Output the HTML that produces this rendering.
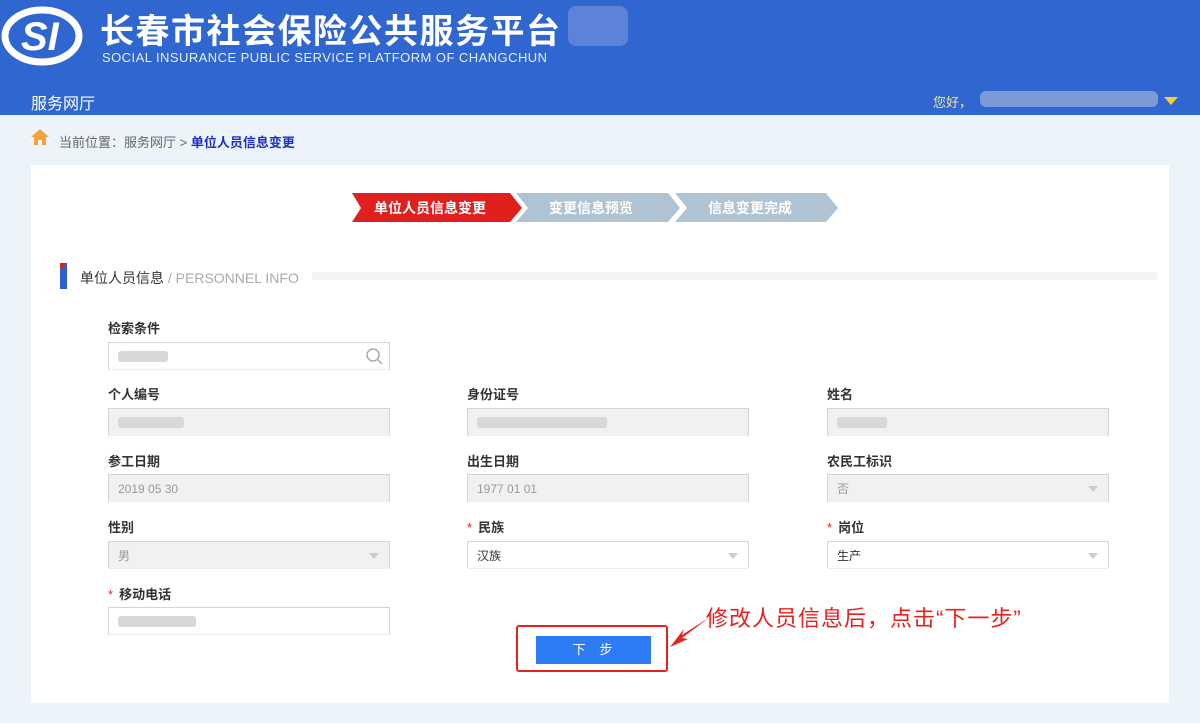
<!DOCTYPE html>
<html><head><meta charset="utf-8">
<style>
*{margin:0;padding:0;box-sizing:border-box}
body{width:1200px;height:723px;background:#edf3fa;font-family:"Liberation Sans","Noto Sans CJK SC",sans-serif;position:relative;overflow:hidden}
.hdr{position:absolute;left:0;top:0;width:1200px;height:115px;background:#2f66d0}
.abs{position:absolute}
.panel{position:absolute;left:31px;top:165px;width:1138px;height:538px;background:#fff}
.lbl{position:absolute;font-size:13px;font-weight:bold;color:#333}
.lbl b{color:#e02020;font-weight:normal;margin-right:6px}
.inp{position:absolute;width:282px;height:28px;border:1px solid #d4d4d4;border-bottom-color:#eee;font-size:12px;color:#999;padding:7px 9px;line-height:14px}
.dis{background:#f2f1f0}
.tri{position:absolute;right:10px;top:11px;width:0;height:0;border-left:5px solid transparent;border-right:5px solid transparent;border-top:6px solid #ccc}
.blur{position:absolute;background:#d8d8d8;height:11px;top:8px;left:9px;border-radius:3px}
</style></head><body>
<div class="hdr"></div>
<svg class="abs" style="left:1px;top:4px" width="84" height="62" viewBox="0 0 84 62">
<ellipse cx="41" cy="32" rx="37" ry="26" fill="none" stroke="#fff" stroke-width="7"/>
<text x="20" y="46" font-family="Liberation Sans" font-style="italic" font-weight="bold" font-size="40" fill="#fff">SI</text>
</svg>
<div class="abs" style="left:100px;top:4px;font-size:34px;font-weight:bold;color:#fff;letter-spacing:1.5px">长春市社会保险公共服务平台</div>
<div class="abs" style="left:568px;top:6px;width:60px;height:40px;background:#6f90dc;opacity:.7;border-radius:8px"></div>
<div class="abs" style="left:102px;top:50px;font-size:13px;color:#e8eefa;letter-spacing:.45px">SOCIAL INSURANCE PUBLIC SERVICE PLATFORM OF CHANGCHUN</div>
<div class="abs" style="left:31px;top:90px;font-size:16px;color:#fff">服务网厅</div>
<div class="abs" style="left:933px;top:92px;font-size:13px;color:#f4e98a">您好，</div>
<div class="abs" style="left:980px;top:91px;width:178px;height:16px;background:#7d9ad8;border-radius:6px"></div>
<div class="abs" style="left:1164px;top:97px;border-left:7px solid transparent;border-right:7px solid transparent;border-top:8px solid #f4d02a"></div>
<svg class="abs" style="left:30px;top:128px" width="20" height="18" viewBox="0 0 20 18"><path d="M10 1 L1 9 H4 V17 H8 V12 H12 V17 H16 V9 H19 Z" fill="#f2a33a"/></svg>
<div class="abs" style="left:59px;top:132px;font-size:13px;color:#666">当前位置：服务网厅 &gt; <span style="color:#1a2fc8;font-weight:bold">单位人员信息变更</span></div>
<div class="panel"></div>
<svg class="abs" style="left:352px;top:193px" width="490" height="30" viewBox="0 0 490 30">
<polygon points="0,0 158,0 170,15 158,29 0,29 9,15" fill="#e0201f"/>
<polygon points="164,0 316,0 328,15 316,29 164,29 176,15" fill="#afc3d2"/>
<polygon points="323,0 474,0 486,15 474,29 323,29 335,15" fill="#afc3d2"/>
<text x="22" y="20" font-size="14" font-weight="bold" fill="#fff" font-family="Liberation Sans,Noto Sans CJK SC">单位人员信息变更</text>
<text x="197" y="20" font-size="14" font-weight="bold" fill="#fff" font-family="Liberation Sans,Noto Sans CJK SC">变更信息预览</text>
<text x="356" y="20" font-size="14" font-weight="bold" fill="#fff" font-family="Liberation Sans,Noto Sans CJK SC">信息变更完成</text>
</svg>
<div class="abs" style="left:60px;top:263px;width:7px;height:26px;background:#2f5fd0"></div>
<div class="abs" style="left:60px;top:263px;width:0;height:0;border-top:7px solid #e0201f;border-right:7px solid transparent"></div>
<div class="abs" style="left:80px;top:268px;font-size:14px;color:#333">单位人员信息 <span style="color:#aaa">/ PERSONNEL INFO</span></div>
<div class="abs" style="left:312px;top:272px;width:845px;height:8px;background:#f2f4f7"></div>

<div class="lbl" style="left:108px;top:318px">检索条件</div>
<div class="inp" style="left:108px;top:342px"><div class="blur" style="width:50px"></div>
<svg class="abs" style="right:4px;top:4px" width="20" height="20" viewBox="0 0 20 20"><circle cx="8" cy="8" r="6" fill="none" stroke="#aaa" stroke-width="1.5"/><path d="M12.5 12.5 L17 17" stroke="#aaa" stroke-width="1.5"/></svg></div>

<div class="lbl" style="left:108px;top:384px">个人编号</div>
<div class="inp dis" style="left:108px;top:408px"><div class="blur" style="width:66px"></div></div>
<div class="lbl" style="left:467px;top:384px">身份证号</div>
<div class="inp dis" style="left:467px;top:408px"><div class="blur" style="width:130px"></div></div>
<div class="lbl" style="left:827px;top:384px">姓名</div>
<div class="inp dis" style="left:827px;top:408px"><div class="blur" style="width:50px"></div></div>

<div class="lbl" style="left:108px;top:451px">参工日期</div>
<div class="inp dis" style="left:108px;top:474px">2019 05 30</div>
<div class="lbl" style="left:467px;top:451px">出生日期</div>
<div class="inp dis" style="left:467px;top:474px">1977 01 01</div>
<div class="lbl" style="left:827px;top:451px">农民工标识</div>
<div class="inp dis" style="left:827px;top:474px">否<div class="tri"></div></div>

<div class="lbl" style="left:108px;top:517px">性别</div>
<div class="inp dis" style="left:108px;top:541px">男<div class="tri"></div></div>
<div class="lbl" style="left:467px;top:517px"><b>*</b>民族</div>
<div class="inp" style="left:467px;top:541px;color:#333">汉族<div class="tri"></div></div>
<div class="lbl" style="left:827px;top:517px"><b>*</b>岗位</div>
<div class="inp" style="left:827px;top:541px;color:#333">生产<div class="tri"></div></div>

<div class="lbl" style="left:108px;top:584px"><b>*</b>移动电话</div>
<div class="inp" style="left:108px;top:607px"><div class="blur" style="width:78px"></div></div>

<div class="abs" style="left:516px;top:625px;width:152px;height:47px;border:2px solid #e8211e;border-radius:3px"></div>
<div class="abs" style="left:536px;top:636px;width:115px;height:28px;background:#2e7cf5;color:#fff;font-size:13px;text-align:center;line-height:28px;letter-spacing:14px;padding-left:12px">下步</div>
<svg class="abs" style="left:668px;top:615px" width="45" height="35" viewBox="0 0 45 35"><path d="M42 2 L14 20 L16 14 L2 32 L20 24 L14 23 Z" fill="#e8211e"/></svg>
<div class="abs" style="left:706px;top:601px;font-size:22px;color:#e8211e;letter-spacing:1px">修改人员信息后，点击“下一步”</div>
</body></html>
